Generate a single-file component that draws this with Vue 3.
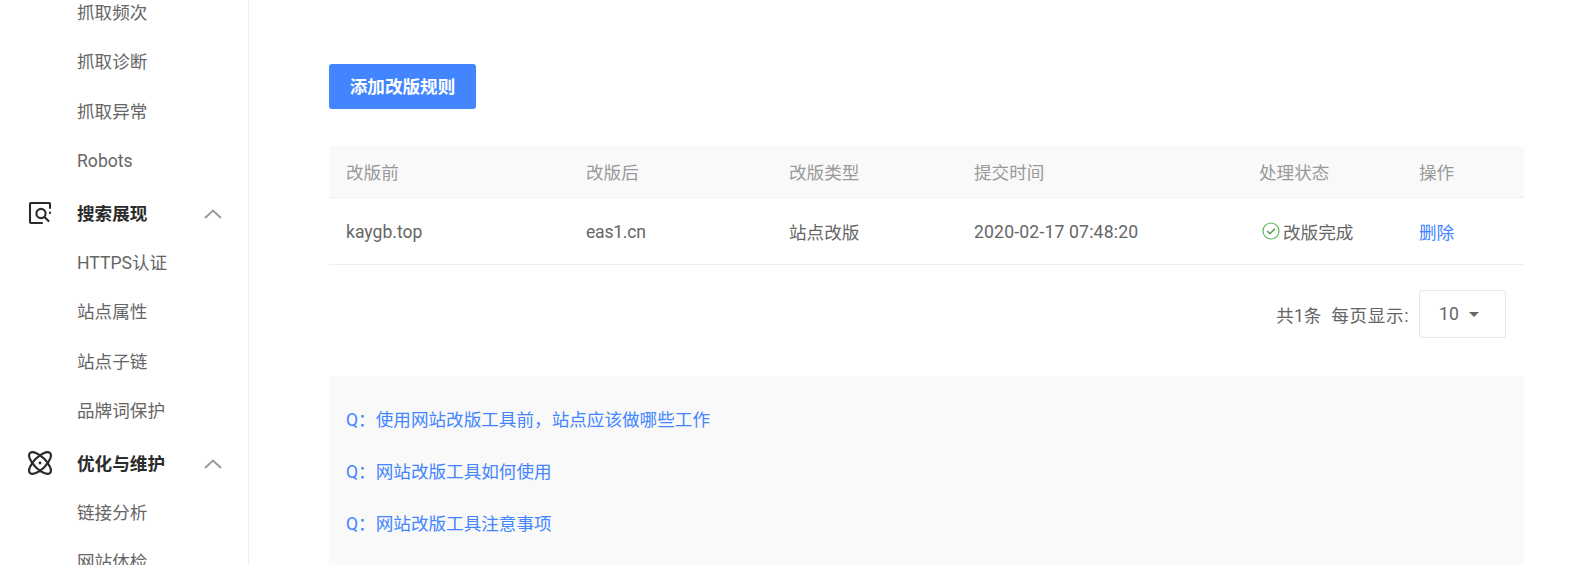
<script setup>
const groupsTop = ['抓取频次', '抓取诊断', '抓取异常', 'Robots']
const search = ['HTTPS认证', '站点属性', '站点子链', '品牌词保护']
const optimize = ['链接分析', '网站体检']
const faqs = ['使用网站改版工具前，站点应该做哪些工作', '网站改版工具如何使用', '网站改版工具注意事项']
</script>

<template>
  <div class="page">
    <aside class="sidebar">
      <div class="nav">
        <div v-for="t in groupsTop" :key="t" class="item">{{ t }}</div>
        <div class="head">
          <svg class="icon" viewBox="0 0 24 24" fill="none" stroke="#2b2b2b" stroke-width="2.1" stroke-linecap="round">
            <path d="M22 7V3a1 1 0 0 0-1-1H3a1 1 0 0 0-1 1v18a1 1 0 0 0 1 1h11" />
            <circle cx="13" cy="12.5" r="4.6" />
            <path d="M16.5 16l4 4" />
            <path d="M22 11.5v.6" />
          </svg>
          <span class="head-text">搜索展现</span>
          <svg class="chev" viewBox="0 0 18 10" fill="none" stroke="#9a9a9a" stroke-width="2"><path d="M1 9l8-7.5L17 9" /></svg>
        </div>
        <div v-for="t in search" :key="t" class="item">{{ t }}</div>
        <div class="head">
          <svg class="icon" viewBox="0 0 24 24" fill="none" stroke="#2b2b2b" stroke-width="2.2">
            <ellipse cx="12" cy="12" rx="6" ry="14.2" transform="rotate(45 12 12)" />
            <ellipse cx="12" cy="12" rx="6" ry="14.2" transform="rotate(-45 12 12)" />
            <circle cx="12" cy="12" r="1.4" fill="#2b2b2b" stroke="none" />
          </svg>
          <span class="head-text">优化与维护</span>
          <svg class="chev" viewBox="0 0 18 10" fill="none" stroke="#9a9a9a" stroke-width="2"><path d="M1 9l8-7.5L17 9" /></svg>
        </div>
        <div v-for="t in optimize" :key="t" class="item">{{ t }}</div>
      </div>
    </aside>

    <main class="main">
      <button class="add">添加改版规则</button>

      <div class="table">
        <div class="row header">
          <div>改版前</div>
          <div>改版后</div>
          <div>改版类型</div>
          <div>提交时间</div>
          <div>处理状态</div>
          <div>操作</div>
        </div>
        <div class="row body">
          <div class="latin">kaygb.top</div>
          <div class="latin site">eas1.cn</div>
          <div>站点改版</div>
          <div class="latin date">2020-02-17 07:48:20</div>
          <div class="status">
            <svg class="ok" viewBox="0 0 18 18" fill="none">
              <circle cx="9" cy="9" r="8" stroke="#5cb85c" stroke-width="1.2" />
              <path d="M5.2 9l2.8 2.8 4.8-5" stroke="#4a9f4a" stroke-width="1.5" />
            </svg>
            <span>改版完成</span>
          </div>
          <div class="link">删除</div>
        </div>
      </div>

      <div class="pager">
        <span class="total">共1条</span>
        <span class="per">每页显示:</span>
        <div class="select">
          <span>10</span>
          <i class="caret"></i>
        </div>
      </div>

      <div class="faq">
        <div v-for="q in faqs" :key="q" class="q">Q：{{ q }}</div>
      </div>
    </main>
  </div>
</template>

<style>
html, body { margin: 0; background: #fff; overflow: hidden; }
</style>

<style scoped>
.page {
  display: flex;
  width: 1593px;
  height: 565px;
  overflow: hidden;
  background: #fff;
  font-family: Roboto, "Noto Sans CJK SC", sans-serif;
  font-size: 17.6px;
  color: #666;
}
.sidebar {
  flex: none;
  width: 248px;
  height: 565px;
  overflow: hidden;
  border-right: 1px solid #ececec;
}
.nav { margin-top: -11.5px; }
.item {
  height: 49.5px;
  line-height: 49.5px;
  padding-left: 77px;
  white-space: nowrap;
}
.head {
  display: flex;
  align-items: center;
  height: 52px;
  padding-left: 28px;
}
.icon { flex: none; width: 24px; height: 24px; }
.head-text {
  margin-left: 25px;
  width: 126px;
  font-weight: 700;
  color: #2b2b2b;
  white-space: nowrap;
}
.chev { flex: none; margin: 2px 0 0 1px; width: 18px; height: 10px; }
.main {
  flex: 1;
  min-width: 0;
  padding: 64px 0 0 80px;
}
.add {
  display: block;
  width: 147px;
  height: 45px;
  padding: 0 0 2px;
  border: 0;
  border-radius: 3px;
  background: #4285ff;
  color: #fff;
  font: inherit;
  font-weight: 700;
}
.table { width: 1195px; margin-top: 37px; }
.row {
  display: grid;
  grid-template-columns: 240px 203px 185px 285px 160px 1fr;
  padding-left: 17px;
  align-items: center;
  border-bottom: 1px solid #eee;
}
.header { height: 51px; background: #f9f9f9; color: #999; }
.body { height: 66px; }
.latin { padding-top: 2px; }
.site { letter-spacing: -0.25px; }
.date { letter-spacing: 0.17px; }
.status { display: flex; align-items: center; padding-left: 3px; }
.ok { flex: none; width: 18px; height: 18px; margin-right: 3px; }
.link { color: #4285ff; }
.pager {
  display: flex;
  align-items: center;
  justify-content: flex-end;
  width: 1177px;
  margin-top: 25px;
  height: 48px;
}
.per { margin-left: 10px; letter-spacing: 0.6px; }
.select {
  display: flex;
  align-items: center;
  box-sizing: border-box;
  width: 87px;
  height: 48px;
  margin-left: 10px;
  padding-left: 19px;
  border: 1px solid #e6e6e6;
  border-radius: 3px;
}
.caret {
  margin-left: 10px;
  width: 0;
  height: 0;
  border-left: 5px solid transparent;
  border-right: 5px solid transparent;
  border-top: 5px solid #666;
}
.faq {
  width: 1178px;
  height: 189px;
  margin-top: 38px;
  padding: 18px 0 0 17px;
  background: #f9f9f9;
  color: #4285ff;
}
.q { height: 52px; line-height: 52px; white-space: nowrap; }
</style>
